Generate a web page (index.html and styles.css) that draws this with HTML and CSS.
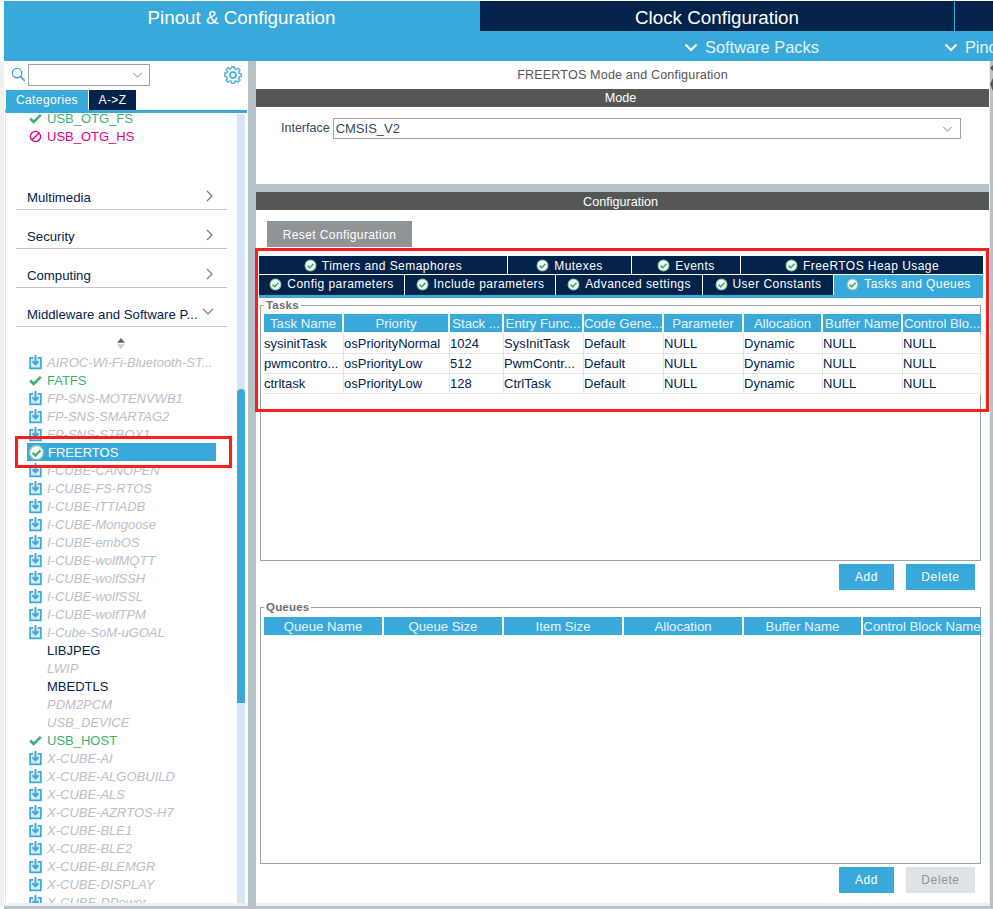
FILE: index.html
```html
<!DOCTYPE html>
<html lang="en">
<head>
<meta charset="utf-8">
<title>FREERTOS Mode and Configuration</title>
<link rel="stylesheet" href="styles.css">
</head>
<body>
<svg class="defs" width="0" height="0">
  <symbol id="dl" viewBox="0 0 14 16"><path d="M4.5 3.5H1.2v11.3h11.6V3.5H9.5" fill="#d6e9f7" stroke="#39a9dc" stroke-width="1.8"/><path d="M7 0.5v9.5M3.8 7.2L7 10.6l3.2-3.4" fill="none" stroke="#39a9dc" stroke-width="2"/></symbol>
  <symbol id="ok" viewBox="0 0 14 12"><path d="M1.2 6l3.8 3.8L12.8 2" fill="none" stroke="#3cb371" stroke-width="2.8"/></symbol>
  <symbol id="tick" viewBox="0 0 14 14"><circle cx="7" cy="7" r="5.8" fill="#fff" stroke="#8fc9a5" stroke-width="1.2"/><path d="M3.8 7.2l2.3 2.3 4.2-4.4" fill="none" stroke="#3cb371" stroke-width="1.9"/></symbol>
</svg>
<header class="topbar">
  <div class="tabs-main">
    <div class="main-tab active">Pinout &amp; Configuration</div>
    <div class="main-tab dark">Clock Configuration</div>
    <div class="main-tab dark rest"></div>
  </div>
  <div class="subnav">
    <span class="sub-item packs"><svg class="chev" viewBox="0 0 14 9"><path d="M1.5 1.5L7 7l5.500-5.500" fill="none" stroke="#fff" stroke-width="2.200"/></svg>Software Packs</span>
    <span class="sub-item pinout"><svg class="chev" viewBox="0 0 14 9"><path d="M1.500 1.500L7 7l5.500-5.500" fill="none" stroke="#fff" stroke-width="2.200"/></svg>Pinout</span>
  </div>
</header>
<div class="workspace">
  <aside class="sidebar">
    <div class="search-row">
      <svg class="search-icon" viewBox="0 0 16 16"><circle cx="6.500" cy="6.500" r="5" fill="none" stroke="#39a9dc" stroke-width="1.500"/><path d="M10.200 10.200l4.500 4.500" stroke="#39a9dc" stroke-width="1.800"/></svg>
      <div class="search-box"><svg class="sel-chev" viewBox="0 0 12 7"><path d="M1 1l5 5 5-5" fill="none" stroke="#777" stroke-width="1.100"/></svg></div>
      <svg class="gear" viewBox="0 0 18 18"><path d="M7.600 1h2.800l.4 2.200 1.400.6 1.900-1.300 2 2-1.300 1.900.6 1.400 2.100.4v2.800l-2.100.4-.6 1.400 1.300 1.900-2 2-1.900-1.300-1.400.6-.4 2.100H7.600l-.4-2.100-1.400-.6-1.900 1.300-2-2 1.300-1.900-.6-1.400L.500 10.400V7.600l2.100-.4.600-1.400-1.300-1.900 2-2 1.900 1.300 1.400-.6z" transform="translate(.3 -.1) scale(.97)" fill="none" stroke="#5bb8e4" stroke-width="1.700"/><circle cx="9" cy="9" r="3" fill="none" stroke="#39a9dc" stroke-width="1.600"/></svg>
    </div>
    <div class="side-tabs">
      <div class="side-tab on">Categories</div>
      <div class="side-tab off">A-&gt;Z</div>
    </div>
    <div class="side-body">
      <div class="tree">
        <div class="row green first"><svg class="ic-ok"><use href="#ok"/></svg>USB_OTG_FS</div>
        <div class="row pink"><svg class="ic-no" viewBox="0 0 14 14"><circle cx="7" cy="7" r="5.500" fill="none" stroke="#e6007e" stroke-width="1.500"/><path d="M3.200 10.800l7.600-7.600" stroke="#e6007e" stroke-width="1.500"/></svg>USB_OTG_HS</div>
        <div class="cat cat-first">Multimedia<svg class="cat-chev" viewBox="0 0 7 12"><path d="M1 1l5 5-5 5" fill="none" stroke="#777" stroke-width="1.100"/></svg></div>
        <div class="cat">Security<svg class="cat-chev" viewBox="0 0 7 12"><path d="M1 1l5 5-5 5" fill="none" stroke="#777" stroke-width="1.100"/></svg></div>
        <div class="cat">Computing<svg class="cat-chev" viewBox="0 0 7 12"><path d="M1 1l5 5-5 5" fill="none" stroke="#777" stroke-width="1.100"/></svg></div>
        <div class="cat">Middleware and Software P...<svg class="cat-chev down" viewBox="0 0 12 7"><path d="M1 1l5 5 5-5" fill="none" stroke="#777" stroke-width="1.100"/></svg></div>
        <div class="sort"><svg viewBox="0 0 8 11" width="8" height="11"><path d="M4 0l4 4.800H0z" fill="#666"/><path d="M0 6.200h8L4 11z" fill="#ccc"/></svg></div>
        <div class="row soft"><svg class="ic-dl"><use href="#dl"/></svg>AIROC-Wi-Fi-Bluetooth-ST...</div>
        <div class="row green"><svg class="ic-ok"><use href="#ok"/></svg>FATFS</div>
        <div class="row soft"><svg class="ic-dl"><use href="#dl"/></svg>FP-SNS-MOTENVWB1</div>
        <div class="row soft"><svg class="ic-dl"><use href="#dl"/></svg>FP-SNS-SMARTAG2</div>
        <div class="row soft"><svg class="ic-dl"><use href="#dl"/></svg>FP-SNS-STBOX1</div>
        <div class="row selected"><svg class="ic-tick"><use href="#tick"/></svg>FREERTOS</div>
        <div class="row soft"><svg class="ic-dl"><use href="#dl"/></svg>I-CUBE-CANOPEN</div>
        <div class="row soft"><svg class="ic-dl"><use href="#dl"/></svg>I-CUBE-FS-RTOS</div>
        <div class="row soft"><svg class="ic-dl"><use href="#dl"/></svg>I-CUBE-ITTIADB</div>
        <div class="row soft"><svg class="ic-dl"><use href="#dl"/></svg>I-CUBE-Mongoose</div>
        <div class="row soft"><svg class="ic-dl"><use href="#dl"/></svg>I-CUBE-embOS</div>
        <div class="row soft"><svg class="ic-dl"><use href="#dl"/></svg>I-CUBE-wolfMQTT</div>
        <div class="row soft"><svg class="ic-dl"><use href="#dl"/></svg>I-CUBE-wolfSSH</div>
        <div class="row soft"><svg class="ic-dl"><use href="#dl"/></svg>I-CUBE-wolfSSL</div>
        <div class="row soft"><svg class="ic-dl"><use href="#dl"/></svg>I-CUBE-wolfTPM</div>
        <div class="row soft"><svg class="ic-dl"><use href="#dl"/></svg>I-Cube-SoM-uGOAL</div>
        <div class="row plain">LIBJPEG</div>
        <div class="row soft bare">LWIP</div>
        <div class="row plain">MBEDTLS</div>
        <div class="row soft bare">PDM2PCM</div>
        <div class="row soft bare">USB_DEVICE</div>
        <div class="row green"><svg class="ic-ok"><use href="#ok"/></svg>USB_HOST</div>
        <div class="row soft"><svg class="ic-dl"><use href="#dl"/></svg>X-CUBE-AI</div>
        <div class="row soft"><svg class="ic-dl"><use href="#dl"/></svg>X-CUBE-ALGOBUILD</div>
        <div class="row soft"><svg class="ic-dl"><use href="#dl"/></svg>X-CUBE-ALS</div>
        <div class="row soft"><svg class="ic-dl"><use href="#dl"/></svg>X-CUBE-AZRTOS-H7</div>
        <div class="row soft"><svg class="ic-dl"><use href="#dl"/></svg>X-CUBE-BLE1</div>
        <div class="row soft"><svg class="ic-dl"><use href="#dl"/></svg>X-CUBE-BLE2</div>
        <div class="row soft"><svg class="ic-dl"><use href="#dl"/></svg>X-CUBE-BLEMGR</div>
        <div class="row soft"><svg class="ic-dl"><use href="#dl"/></svg>X-CUBE-DISPLAY</div>
        <div class="row soft"><svg class="ic-dl"><use href="#dl"/></svg>X-CUBE-DPower</div>
      </div>
      <div class="side-scroll"><div class="side-thumb"></div></div>
    </div>
  </aside>
  <main class="content">
    <h1 class="page-title">FREERTOS Mode and Configuration</h1>
    <div class="bar">Mode</div>
    <div class="iface">
      <span class="iface-label">Interface</span>
      <div class="iface-select">CMSIS_V2<svg class="sel-chev" viewBox="0 0 12 7"><path d="M1 1l5 5 5-5" fill="none" stroke="#777" stroke-width="1.100"/></svg></div>
    </div>
    <div class="splitter"></div>
    <div class="bar config-bar">Configuration</div>
    <button class="reset">Reset Configuration</button>
    <div class="tabrow row-a">
      <div class="ctab"><svg class="ic-tick"><use href="#tick"/></svg>Timers and Semaphores</div>
      <div class="ctab"><svg class="ic-tick"><use href="#tick"/></svg>Mutexes</div>
      <div class="ctab"><svg class="ic-tick"><use href="#tick"/></svg>Events</div>
      <div class="ctab"><svg class="ic-tick"><use href="#tick"/></svg>FreeRTOS Heap Usage</div>
    </div>
    <div class="tabrow row-b">
      <div class="ctab"><svg class="ic-tick"><use href="#tick"/></svg>Config parameters</div>
      <div class="ctab"><svg class="ic-tick"><use href="#tick"/></svg>Include parameters</div>
      <div class="ctab"><svg class="ic-tick"><use href="#tick"/></svg>Advanced settings</div>
      <div class="ctab"><svg class="ic-tick"><use href="#tick"/></svg>User Constants</div>
      <div class="ctab current"><svg class="ic-tick"><use href="#tick"/></svg>Tasks and Queues</div>
    </div>
    <div class="tab-line"></div>
    <fieldset class="group tasks">
      <legend>Tasks</legend>
      <div class="grid grid-tasks">
        <div class="th">Task Name</div><div class="th">Priority</div><div class="th">Stack ...</div><div class="th">Entry Func...</div><div class="th">Code Gene...</div><div class="th">Parameter</div><div class="th">Allocation</div><div class="th">Buffer Name</div><div class="th">Control Blo...</div>
        <div class="td">sysinitTask</div><div class="td">osPriorityNormal</div><div class="td">1024</div><div class="td">SysInitTask</div><div class="td">Default</div><div class="td">NULL</div><div class="td">Dynamic</div><div class="td">NULL</div><div class="td">NULL</div>
        <div class="td">pwmcontro...</div><div class="td">osPriorityLow</div><div class="td">512</div><div class="td">PwmContr...</div><div class="td">Default</div><div class="td">NULL</div><div class="td">Dynamic</div><div class="td">NULL</div><div class="td">NULL</div>
        <div class="td">ctrltask</div><div class="td">osPriorityLow</div><div class="td">128</div><div class="td">CtrlTask</div><div class="td">Default</div><div class="td">NULL</div><div class="td">Dynamic</div><div class="td">NULL</div><div class="td">NULL</div>
      </div>
    </fieldset>
    <div class="actions"><button class="btn add">Add</button><button class="btn del">Delete</button></div>
    <fieldset class="group queues">
      <legend>Queues</legend>
      <div class="grid grid-queues">
        <div class="th">Queue Name</div><div class="th">Queue Size</div><div class="th">Item Size</div><div class="th">Allocation</div><div class="th">Buffer Name</div><div class="th">Control Block Name</div>
      </div>
    </fieldset>
    <div class="actions"><button class="btn add">Add</button><button class="btn del off">Delete</button></div>
    <div class="mark mark-tabs"></div>
  </main>
  <div class="edge">
    <svg class="edge-arrows" viewBox="0 0 3 28" width="3" height="28"><path d="M3 1v6L0 4z" fill="#55595c"/><path d="M3 14v13L0 20z" fill="#55595c"/></svg>
  </div>
  <div class="mark mark-item"></div>
</div>
<div class="footer-line"></div>
</body>
</html>
```
FILE: styles.css
```css
* { box-sizing: border-box; }
html, body { margin: 0; padding: 0; height: 909px; overflow: hidden; background: #fff; }
body { font-family: "Liberation Sans", Arial, sans-serif; font-size: 12px; color: #03234b; padding-top: 1px; display: flex; flex-direction: column; }
.defs { position: absolute; }
svg { display: block; flex: none; }

.topbar { margin-left: 4px; height: 60px; background: #39a9dc; flex: none; color: #fff; }
.tabs-main { display: flex; height: 30px; gap: 1px; }
.main-tab { width: 475px; font-size: 18.800px; line-height: 33px; text-align: center; color: #fff; }
.main-tab.dark { background: #03234b; width: 474px; }
.main-tab.rest { flex: 1; width: auto; }
.subnav { height: 30px; display: flex; font-size: 16.400px; line-height: 32px; color: #e6f3fa; white-space: nowrap; overflow: hidden; padding-top: 2px; }
.sub-item { display: flex; align-items: center; gap: 7px; height: 28px; }
.packs { margin-left: 680px; }
.pinout { margin-left: 125px; }
.chev { width: 14px; height: 9px; }

.workspace { display: flex; height: 845px; flex: none; position: relative; background: #eef0f3; padding-bottom: 3px; }
.sidebar { margin-left: 4px; width: 244px; display: flex; flex-direction: column; background: #fff; }
.search-row { height: 29px; flex: none; display: flex; align-items: center; padding: 0 6px 0 7px; }
.search-icon { width: 15px; height: 15px; margin-top: -2px; }
.search-box { width: 122px; height: 22px; margin: -1px 0 0 2px; border: 1px solid #9ea3a8; display: flex; align-items: center; justify-content: flex-end; padding-right: 6px; }
.sel-chev { width: 11px; height: 6px; }
.gear { width: 18px; height: 18px; margin-left: auto; margin-top: -2px; }
.side-tabs { display: flex; height: 20px; flex: none; margin-left: 2px; gap: 1px; }
.side-tab { color: #fff; font-size: 12px; line-height: 20px; text-align: center; letter-spacing: .4px; }
.side-tab.on { background: #39a9dc; width: 82px; }
.side-tab.off { background: #03234b; width: 47px; }
.side-body { flex: 1; min-height: 0; display: flex; border-top: 3px solid #39a9dc; margin-left: 1px; margin-right: 1px; overflow: hidden; border-left: 1px solid #e4e8ea; }
.tree { flex: 1; overflow: hidden; min-width: 0; padding-left: 6px; }
.side-scroll { width: 8px; background: #d6e6f4; flex: none; padding-top: 275px; margin: 1px 2px 0 0; }
.side-thumb { height: 314px; background: #39a9dc; border-radius: 4px 4px 0 0; }
.row { height: 18px; display: flex; align-items: center; font-size: 13px; white-space: nowrap; }
.row.first { margin-top: -4px; }
.row.green { color: #3cb371; padding-left: 17px; }
.row.pink { color: #e6007e; padding-left: 17px; }
.row.soft { color: #b9c0c9; font-style: italic; padding-left: 17px; }
.row.soft.bare { margin-left: 35px; padding-left: 0; }
.row.plain { color: #03234b; margin-left: 35px; }
.row.selected { background: #39a9dc; color: #fff; margin-left: 15px; width: 189px; padding-left: 1px; }
.row.selected .ic-tick { width: 17px; height: 17px; margin-right: 3px; }
.ic-ok { width: 13px; height: 11px; }
.ic-no { width: 13px; height: 13px; }
.ic-dl { width: 13px; height: 16px; }
.ic-tick { width: 13px; height: 13px; }
.row .ic-ok, .row .ic-no, .row .ic-dl { margin-right: 5px; }
.cat { height: 39px; margin: 0 10px 0 4px; border-bottom: 1px solid #bfc5ca; font-size: 13.200px; padding: 19px 0 0 11px; line-height: 16px; position: relative; white-space: nowrap; }
.cat-first { height: 65px; padding-top: 45px; }
.cat-chev { position: absolute; right: 14px; bottom: 7px; width: 7px; height: 12px; }
.cat-chev.down { width: 12px; height: 7px; right: 13px; bottom: 11px; }
.sort { height: 26px; padding: 11px 0 0 105px; }

.content { width: 733px; margin-left: 8px; flex: none; position: relative; background: #fff; }
.page-title { margin: 0; font-weight: normal; font-size: 12.600px; letter-spacing: .15px; height: 28px; line-height: 28px; text-align: center; color: #55575a; }
.bar { height: 18px; background: #555757; color: #fff; text-align: center; font-size: 12.600px; line-height: 19px; padding-right: 4px; }
.config-bar { line-height: 20px; }
.iface { height: 77px; padding: 11px 0 0 25px; display: flex; align-items: flex-start; gap: 3px; }
.iface-label { line-height: 21px; color: #33485f; font-size: 12.500px; }
.iface-select { width: 628px; height: 21px; border: 1px solid #9ea3a8; padding: 0 7px 0 2px; display: flex; align-items: center; justify-content: space-between; color: #33485f; font-size: 13px; }
.splitter { height: 8px; background: #b7c3c9; }
.reset { display: block; margin: 11px 0 0 11px; width: 145px; height: 26px; background: #8f9499; color: #fff; border: 0; padding: 1px 0 0; font: 12px "Liberation Sans", Arial, sans-serif; letter-spacing: .4px; }
.tabrow { display: flex; margin: 0 6px 0 3px; gap: 1px; }
.row-a { margin-top: 9px; height: 18px; }
.row-a .ctab { padding-top: 1px; }
.row-b { margin-top: 1px; height: 20px; }
.row-b .ctab { padding-bottom: 2px; }
.ctab { background: #03234b; color: #fff; font-size: 12px; letter-spacing: .45px; display: flex; align-items: center; justify-content: center; gap: 5px; white-space: nowrap; }
.ctab.current { background: #39a9dc; }
.row-a .ctab:nth-child(1) { width: 248px; }
.row-a .ctab:nth-child(2) { width: 123px; }
.row-a .ctab:nth-child(3) { width: 108px; }
.row-a .ctab:nth-child(4) { flex: 1; }
.row-b .ctab:nth-child(1) { width: 145px; }
.row-b .ctab:nth-child(2) { width: 150px; }
.row-b .ctab:nth-child(3) { width: 146px; }
.row-b .ctab:nth-child(4) { width: 130px; }
.row-b .ctab:nth-child(5) { flex: 1; }
.tab-line { height: 3px; margin: 0 6px 0 3px; background: #39a9dc; }
.group { margin: 0 8px 0 4px; padding: 0 0 0 3px; border: 1px solid #9ea3a8; min-width: 0; }
.group legend { font-size: 11.500px; font-weight: bold; color: #6b6f73; padding: 0 2px; margin-left: 0; line-height: 13px; letter-spacing: .2px; }
.tasks { margin-top: 1px; height: 262px; }
.queues { margin-top: 10px; height: 263px; }
.grid { display: grid; margin-top: 2px; }
.grid-tasks { grid-template-columns: 80px 106px 54px 80px 80px 80px 79px 80px 78px; grid-auto-rows: 20px; width: 717px; }
.grid-queues { grid-template-columns: 120px 120px 120px 120px 119px 118px; width: 717px; margin-top: 3px; }
.th { height: 18px; margin-right: 2px; background: #39a9dc; color: #e9f5fb; text-align: center; font-size: 13.200px; line-height: 20px; white-space: nowrap; overflow: hidden; margin-bottom: 1px; }
.grid-tasks .th:nth-child(9), .grid-queues .th:nth-child(6) { margin-right: 0; }
.td { height: 20px; border-right: 1px solid #e4e7ea; border-bottom: 1px solid #e4e7ea; font-size: 13px; line-height: 20px; color: #03234b; white-space: nowrap; overflow: hidden; }
.actions { height: 30px; display: flex; justify-content: flex-end; gap: 12px; padding: 3px 14px 0 0; }
.btn { height: 26px; border: 0; background: #39a9dc; color: #fff; font: 12px "Liberation Sans", Arial, sans-serif; letter-spacing: .6px; }
.btn.add { width: 55px; }
.btn.del { width: 69px; }
.btn.del.off { background: #dfe3e6; color: #8f9499; }

.edge { width: 3px; margin: 0 0 -3px 1px; background: #b7c3c9; padding-top: 3px; }
.mark { position: absolute; border: 3px solid #fe1d1d; pointer-events: none; }
.mark-tabs { left: -1px; top: 187px; width: 734px; height: 164px; }
.mark-item { left: 15px; top: 375px; width: 217px; height: 32px; }
.content::before { content: ""; position: absolute; left: -8px; top: 0; bottom: -3px; width: 8px; background: #b7c3c9; }
.footer-line { height: 3px; margin-left: 4px; background: #b7c3c9; flex: none; }
```
